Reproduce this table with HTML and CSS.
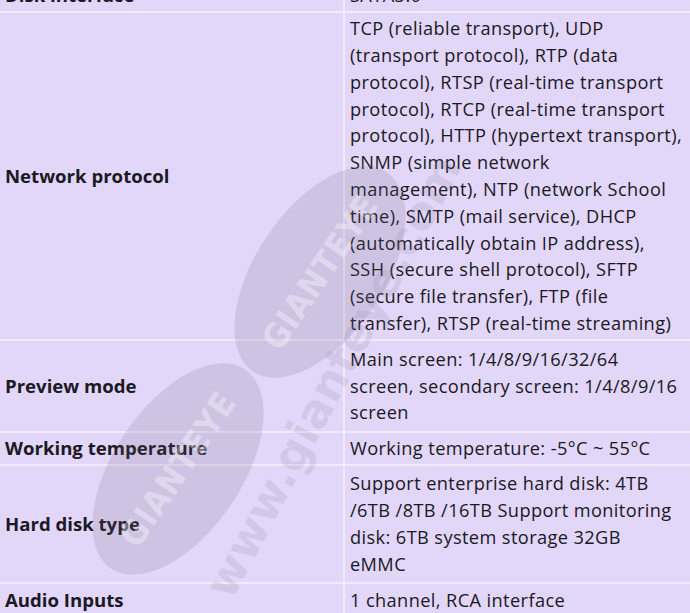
FILE: index.html
```html
<!DOCTYPE html>
<html>
<head>
<meta charset="utf-8">
<link rel="stylesheet" href="styles.css">
</head>
<body>
<div class="page">
  <table class="spec">
    <tr class="r-disk"><th>Disk interface</th><td>SATA3.0</td></tr>
    <tr class="r-net"><th>Network protocol</th><td>TCP (reliable transport), UDP<br>(transport protocol), RTP (data<br>protocol), RTSP (real-time transport<br>protocol), RTCP (real-time transport<br>protocol), HTTP (hypertext transport),<br>SNMP (simple network<br>management), NTP (network School<br>time), SMTP (mail service), DHCP<br>(automatically obtain IP address),<br>SSH (secure shell protocol), SFTP<br>(secure file transfer), FTP (file<br>transfer), RTSP (real-time streaming)</td></tr>
    <tr class="r-prev"><th>Preview mode</th><td>Main screen: 1/4/8/9/16/32/64<br>screen, secondary screen: 1/4/8/9/16<br>screen</td></tr>
    <tr class="r-temp"><th>Working temperature</th><td>Working temperature: -5°C ~ 55°C</td></tr>
    <tr class="r-hdd"><th>Hard disk type</th><td>Support enterprise hard disk: 4TB<br>/6TB /8TB /16TB Support monitoring<br>disk: 6TB system storage 32GB<br>eMMC</td></tr>
    <tr class="r-audio"><th>Audio Inputs</th><td>1 channel, RCA interface</td></tr>
  </table>
  <div class="watermark" aria-hidden="true">
    <div class="wm-badge wm-a"><span>GIANTEYE</span></div>
    <div class="wm-badge wm-b"><span>GIANTEYE</span></div>
    <div class="wm-url">www.gianteye.com</div>
  </div>
</div>
</body>
</html>
```
FILE: styles.css
```css
html, body {
  margin: 0;
  padding: 0;
  background: #e2d6f9;
  overflow: hidden;
}
.page {
  position: relative;
  width: 690px;
  height: 613px;
  overflow: hidden;
}
.spec {
  width: 690px;
  border-collapse: collapse;
  table-layout: fixed;
  margin-top: -21px;
  font-family: "Open Sans", "Noto Sans", sans-serif;
  font-size: 18.2px;
  line-height: 26.8px;
  color: #1a1924;
  background: #e2d6f9;
}
.spec th, .spec td {
  border: 2px solid #f1ebfc;
  padding: 2px 2px 2px 5px;
  vertical-align: middle;
  text-align: left;
}
.spec td {
  white-space: nowrap;
  overflow: hidden;
  letter-spacing: 0.4px;
}
.spec th {
  width: 336px;
  font-weight: 700;
  font-size: 18.6px;
}
.spec tr:first-child th, .spec tr:first-child td { border-top: 0; }
.spec th { border-left: 0; }
.spec td { border-right: 0; }
.r-disk { height: 33px; }
.r-net { height: 328px; }
.r-prev { height: 92px; }
.r-temp { height: 33px; }
.r-hdd { height: 118px; }
.r-audio { height: 35px; }

.watermark {
  position: absolute;
  inset: 0;
  pointer-events: none;
}
.wm-badge {
  position: absolute;
  width: 240px;
  height: 128px;
  border-radius: 50%;
  background: rgba(110, 100, 125, 0.17);
  transform: rotate(-56deg);
  display: flex;
  align-items: center;
  justify-content: center;
}
.wm-badge span {
  font-family: "DejaVu Sans Condensed", "DejaVu Sans", sans-serif;
  font-weight: 700;
  font-size: 34px;
  color: rgba(255, 255, 255, 0.35);
  letter-spacing: 1px;
}
.wm-a { left: 200px; top: 208px; }
.wm-b { left: 58px; top: 405px; }
.wm-url {
  position: absolute;
  left: 90px;
  top: 355px;
  width: 480px;
  text-align: center;
  font-family: "DejaVu Sans", sans-serif;
  font-weight: 700;
  font-size: 46px;
  color: rgba(130, 120, 140, 0.17);
  transform: rotate(-62deg);
  white-space: nowrap;
}
```
